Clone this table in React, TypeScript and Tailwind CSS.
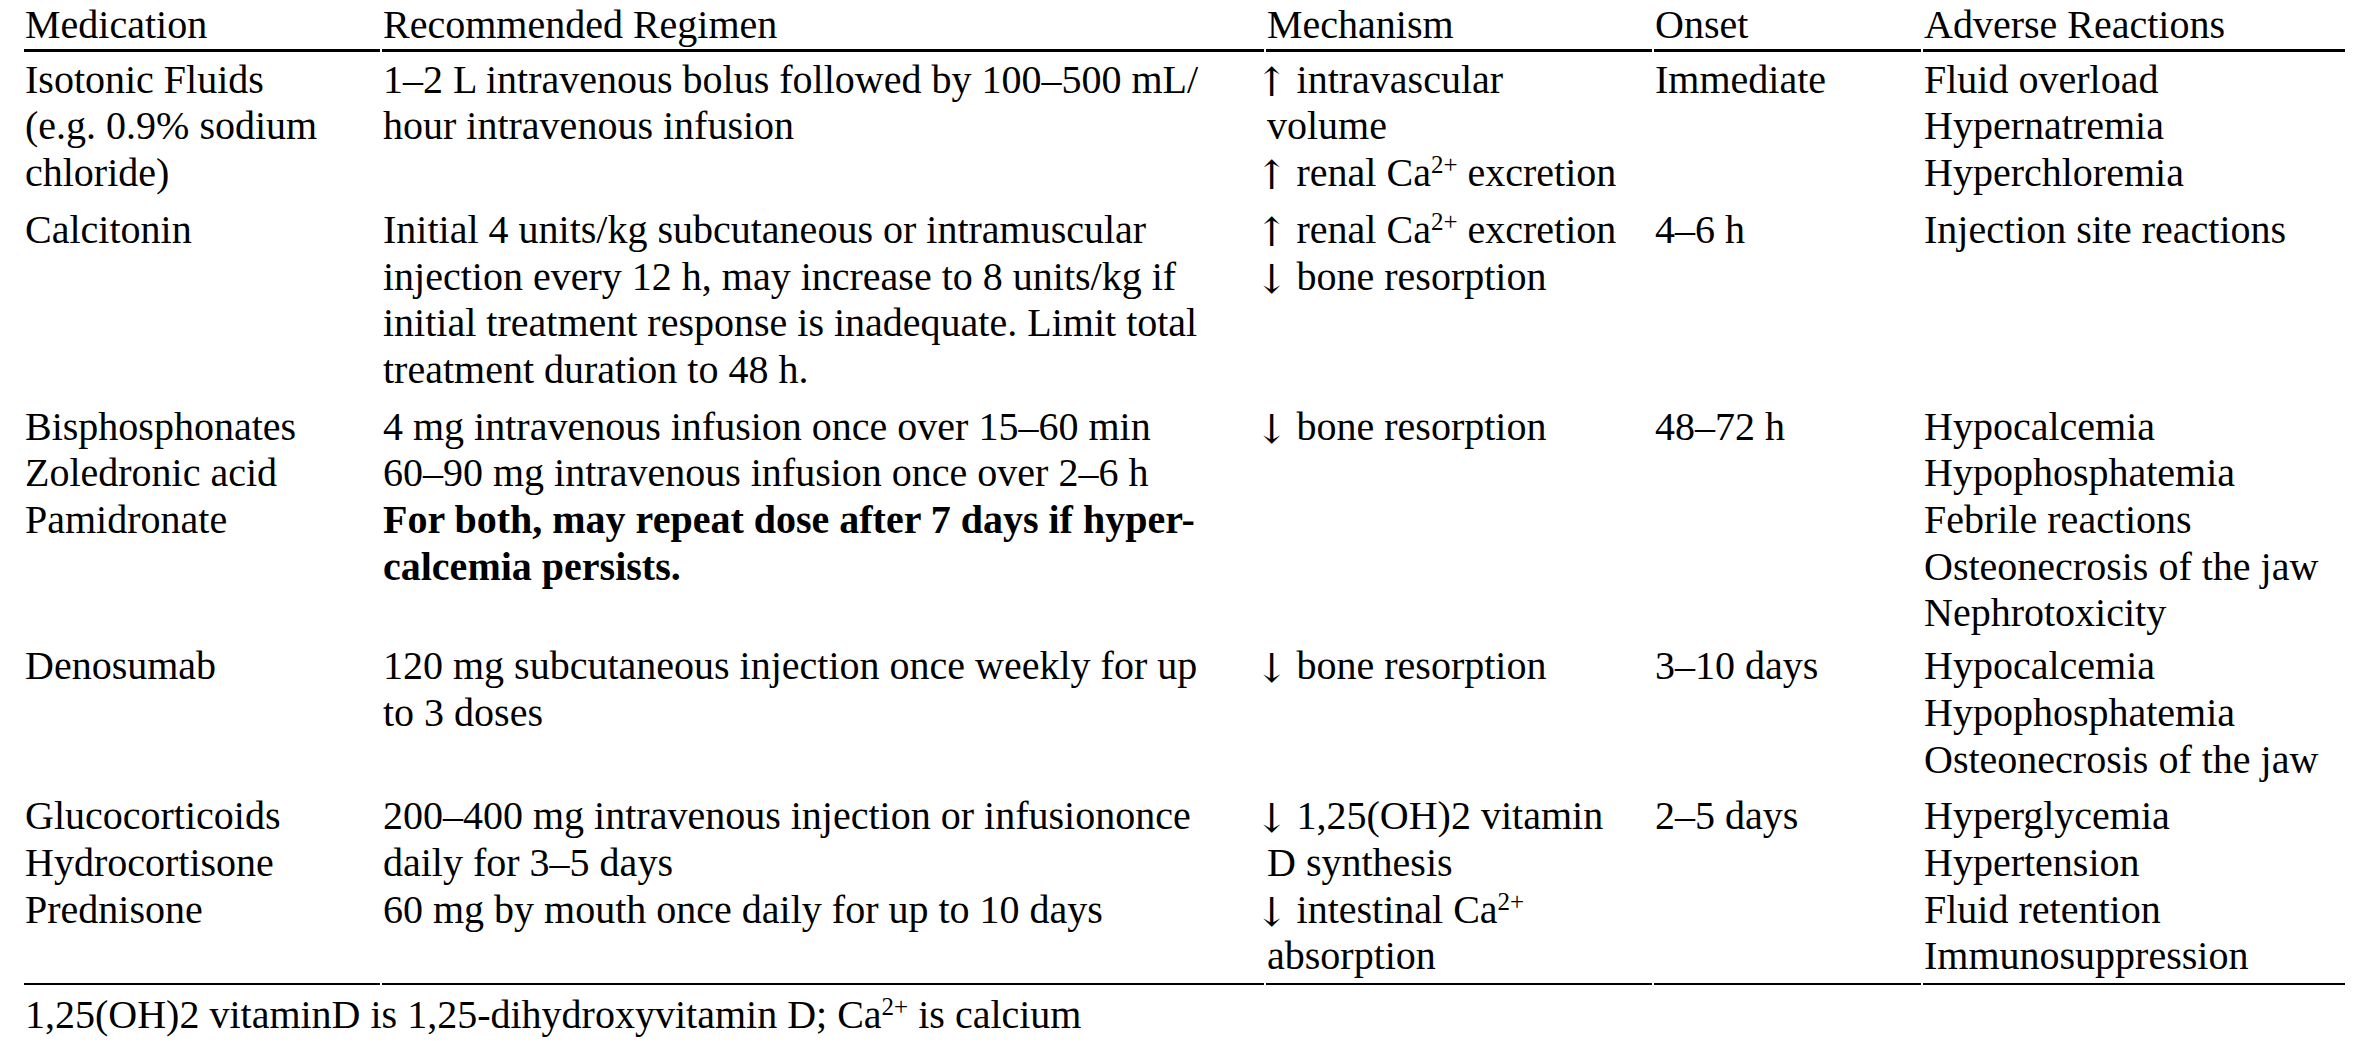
import type { ReactNode } from 'react';

// shared column template: cells are separated by a 2px gap so the rules show small notches
const ROW = 'grid grid-cols-[356px_882px_386px_267px_422px] gap-x-[2px]';

type Row = {
  pad: string;
  cells: ReactNode[];
};

function Ca() {
  return (
    <>
      Ca<span className="text-[25px] leading-none align-[13px]">2+</span>
    </>
  );
}

// DejaVu Serif has the long thin arrows of the source; its advance is wide, so pull it in
function Up() {
  return <span className="font-['DejaVu_Serif',serif] leading-none align-[-3px] ml-[-12px] mr-[-2px]">↑</span>;
}

function Down() {
  return <span className="font-['DejaVu_Serif',serif] leading-none align-[-3px] ml-[-12px] mr-[-2px]">↓</span>;
}

const ROWS: Row[] = [
  {
    pad: 'pt-[5px]',
    cells: [
      <>Isotonic Fluids<br />(e.g. 0.9% sodium<br />chloride)</>,
      <>1–2 L intravenous bolus followed by 100–500 mL/<br />hour intravenous infusion</>,
      <><Up /> intravascular<br />volume<br /><Up /> renal <Ca /> excretion</>,
      <>Immediate</>,
      <>Fluid overload<br />Hypernatremia<br />Hyperchloremia</>,
    ],
  },
  {
    pad: 'pt-[10px]',
    cells: [
      <>Calcitonin</>,
      <>
        Initial 4 units/kg subcutaneous or intramuscular<br />
        injection every 12 h, may increase to 8 units/kg if<br />
        initial treatment response is inadequate. Limit total<br />
        treatment duration to 48 h.
      </>,
      <><Up /> renal <Ca /> excretion<br /><Down /> bone resorption</>,
      <>4–6 h</>,
      <>Injection site reactions</>,
    ],
  },
  {
    pad: 'pt-[10px]',
    cells: [
      <>Bisphosphonates<br />Zoledronic acid<br />Pamidronate</>,
      <>
        4 mg intravenous infusion once over 15–60 min<br />
        60–90 mg intravenous infusion once over 2–6 h<br />
        <span className="font-bold">
          For both, may repeat dose after 7 days if hyper-<br />
          calcemia persists.
        </span>
      </>,
      <><Down /> bone resorption</>,
      <>48–72 h</>,
      <>Hypocalcemia<br />Hypophosphatemia<br />Febrile reactions<br />Osteonecrosis of the jaw<br />Nephrotoxicity</>,
    ],
  },
  {
    pad: 'pt-[6px]',
    cells: [
      <>Denosumab</>,
      <>120 mg subcutaneous injection once weekly for up<br />to 3 doses</>,
      <><Down /> bone resorption</>,
      <>3–10 days</>,
      <>Hypocalcemia<br />Hypophosphatemia<br />Osteonecrosis of the jaw</>,
    ],
  },
  {
    pad: 'pt-[10px] pb-[3px] border-b-2 border-black',
    cells: [
      <>Glucocorticoids<br />Hydrocortisone<br />Prednisone</>,
      <>
        200–400 mg intravenous injection or infusiononce<br />
        daily for 3–5 days<br />
        60 mg by mouth once daily for up to 10 days
      </>,
      <><Down /> 1,25(OH)2 vitamin<br />D synthesis<br /><Down /> intestinal <Ca /><br />absorption</>,
      <>2–5 days</>,
      <>Hyperglycemia<br />Hypertension<br />Fluid retention<br />Immunosuppression</>,
    ],
  },
];

const HEADERS = ['Medication', 'Recommended Regimen', 'Mechanism', 'Onset', 'Adverse Reactions'];

export default function App() {
  return (
    <div className="min-h-screen bg-white text-black font-['Liberation_Serif','Times_New_Roman',serif] text-[40px] leading-[46.7px]">
      <div className="pl-[24px] pt-[2px]">
        {/* Header */}
        <div className={ROW}>
          {HEADERS.map((h) => (
            <div key={h} className="pl-[1px] border-b-[3px] border-black whitespace-nowrap">
              {h}
            </div>
          ))}
        </div>

        {/* Body */}
        {ROWS.map((row, i) => (
          <div key={i} className={ROW}>
            {row.cells.map((cell, j) => (
              <div key={j} className={`pl-[1px] whitespace-nowrap ${row.pad}`}>
                {cell}
              </div>
            ))}
          </div>
        ))}

        {/* Footnote */}
        <p className="pl-[1px] pt-[7px] whitespace-nowrap">
          1,25(OH)2 vitaminD is 1,25-dihydroxyvitamin D; <Ca /> is calcium
        </p>
      </div>
    </div>
  );
}
